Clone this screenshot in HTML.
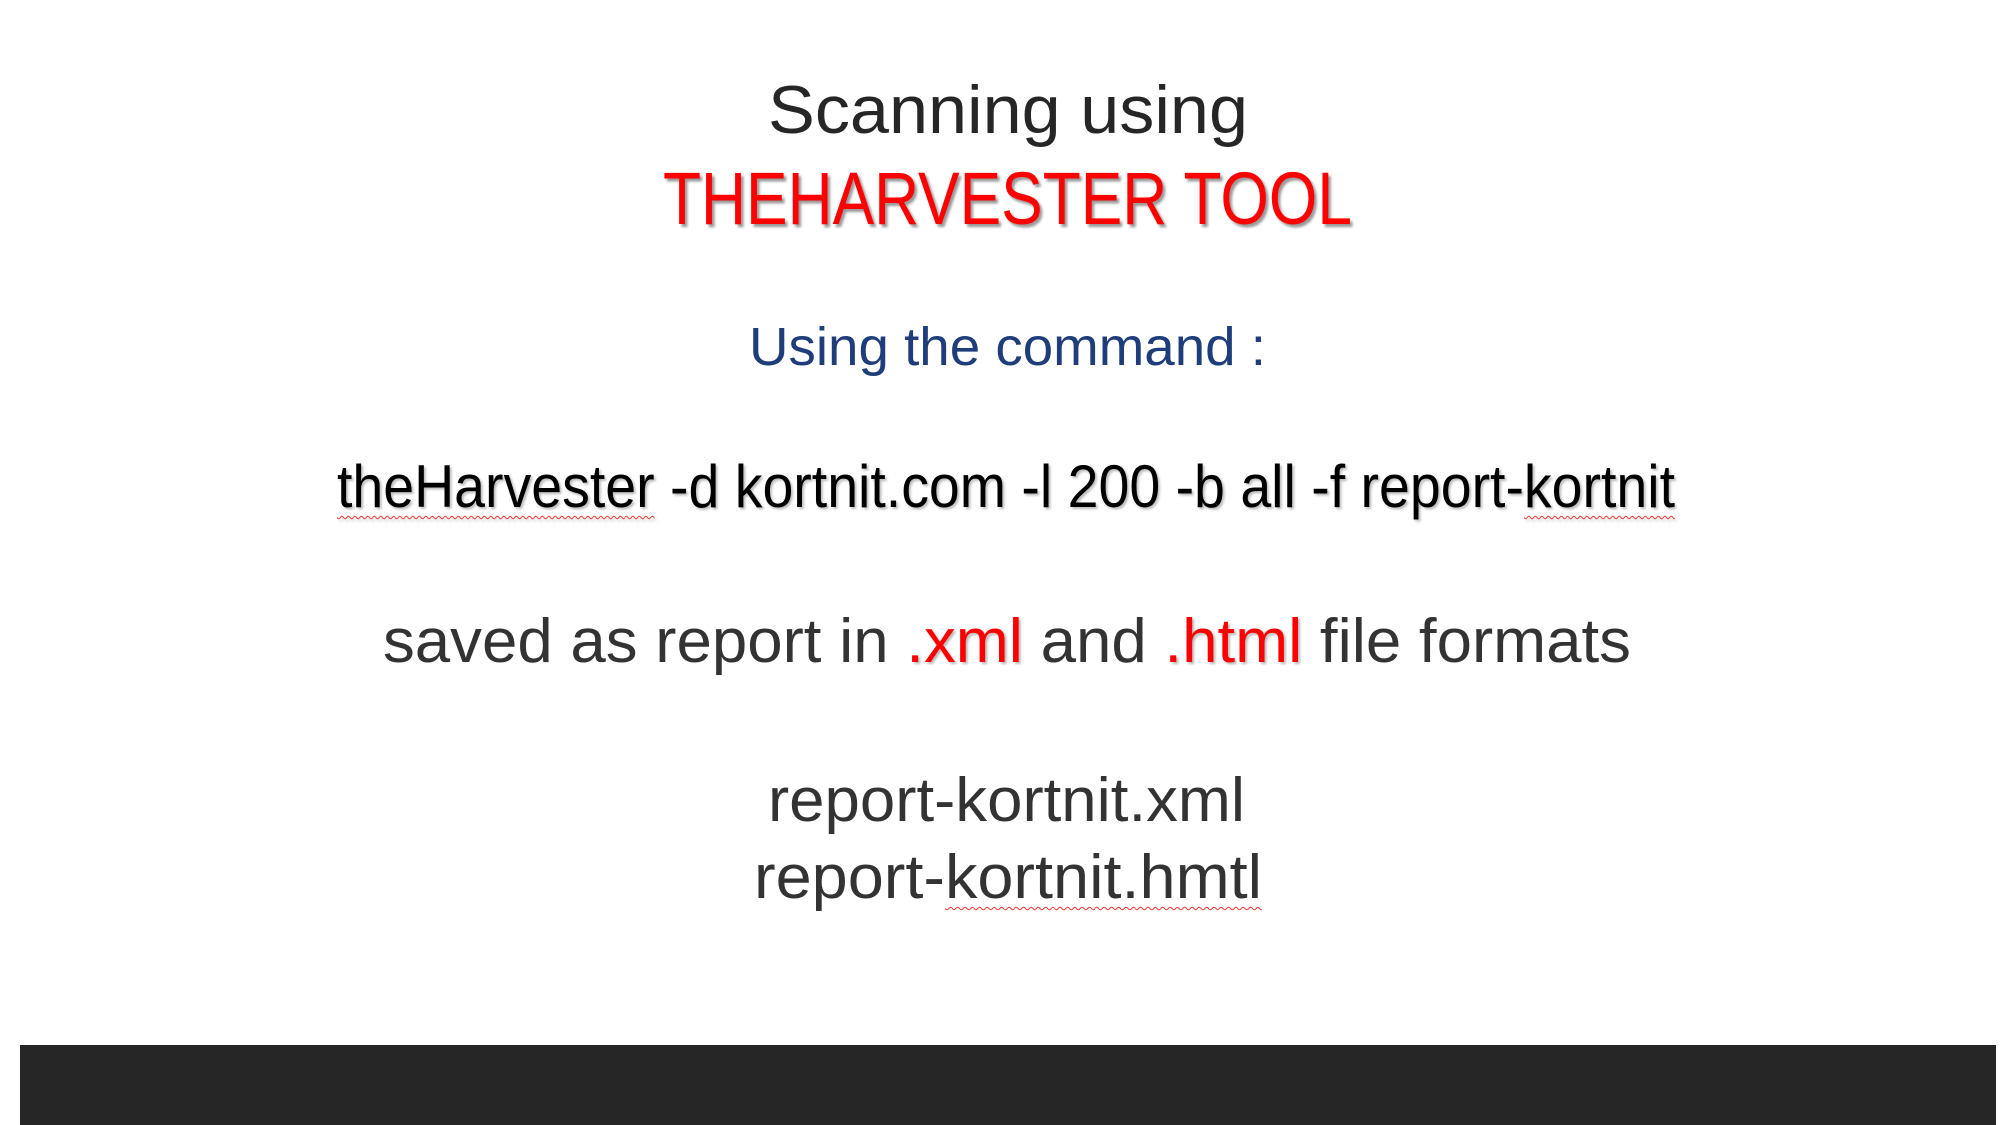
<!DOCTYPE html>
<html><head><meta charset="utf-8"><style>
html,body{margin:0;padding:0;background:#fff;width:2000px;height:1125px;overflow:hidden;position:relative;font-family:"Liberation Sans",sans-serif}
.l{position:absolute;white-space:nowrap;transform-origin:0 0;line-height:1}
.r{color:#ff0000}
.sq{text-decoration:underline wavy #e33;text-decoration-thickness:1px;text-underline-offset:8px}
#bar{position:absolute;left:20px;top:1045px;width:1976px;height:80px;background:#262626}
</style></head><body>
<div class="l" id="a" style="font-size:68px;color:#262626">Scanning using</div>
<div class="l r" id="b" style="font-size:74px;text-shadow:3px 3px 3px #999">THEHARVESTER TOOL</div>
<div class="l" id="c" style="font-size:54px;color:#1f3d7a">Using the command :</div>
<div class="l" id="d" style="font-size:60px;color:#000;text-shadow:2px 2px 3px #bbb"><span class="sq">theHarvester</span> -d kortnit.com -l 200 -b all -f report-<span class="sq">kortnit</span></div>
<div class="l" id="e" style="font-size:62px;color:#333">saved as report in <span class="r" style="text-shadow:2px 2px 2px #bbb">.xml</span> and <span class="r" style="text-shadow:2px 2px 2px #bbb">.html</span> file formats</div>
<div class="l" id="f" style="font-size:62px;color:#333">report-kortnit.xml</div>
<div class="l" id="g" style="font-size:62px;color:#333">report-<span class="sq">kortnit.hmtl</span></div>
<div id="bar"></div>
<script>
var T=[["a",768,1248,137],["b",663,1352,229],["c",749,1266,369],["d",337,1675,511],["e",383,1631,667],["f",768,1245,826],["g",754,1262,903]];
T.forEach(function(t){var el=document.getElementById(t[0]);var w=el.getBoundingClientRect().width;var fs=parseFloat(el.style.fontSize);var s=(t[2]-t[1])/w;el.style.left=t[1]+"px";el.style.top=(t[3]-fs*0.9)+"px";el.style.transform="scaleX("+s+")";});
</script>
</body></html>
